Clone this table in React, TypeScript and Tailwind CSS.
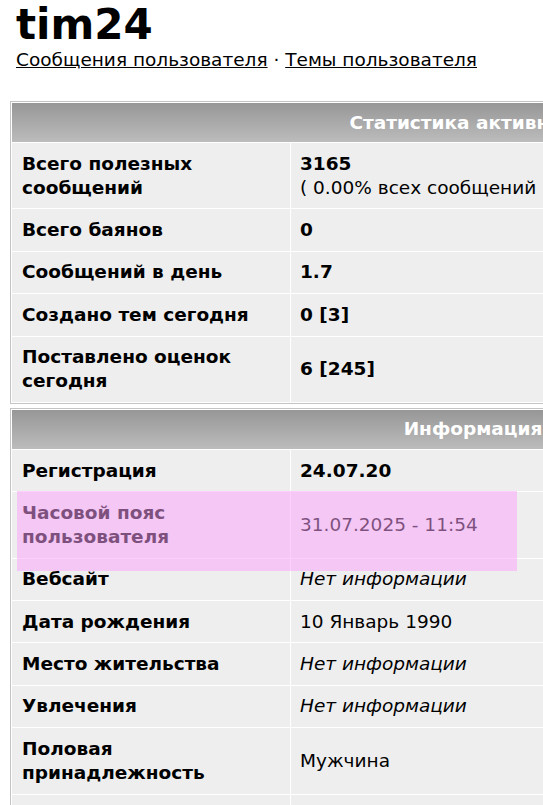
import React from 'react';

type Row = { label: string; value: React.ReactNode; valueClass?: string };

const statsRows: Row[] = [
  {
    label: 'Всего полезных сообщений',
    value: (
      <>
        <div className="font-bold">3165</div>
        <div>( 0.00% всех сообщений )</div>
      </>
    ),
  },
  { label: 'Всего баянов', value: '0', valueClass: 'font-bold' },
  { label: 'Сообщений в день', value: '1.7', valueClass: 'font-bold' },
  { label: 'Создано тем сегодня', value: '0 [3]', valueClass: 'font-bold' },
  { label: 'Поставлено оценок сегодня', value: '6 [245]', valueClass: 'font-bold' },
];

const infoRows: Row[] = [
  { label: 'Регистрация', value: '24.07.20', valueClass: 'font-bold' },
  { label: 'Часовой пояс пользователя', value: '31.07.2025 - 11:54' },
  { label: 'Вебсайт', value: 'Нет информации', valueClass: 'italic' },
  { label: 'Дата рождения', value: '10 Январь 1990' },
  { label: 'Место жительства', value: 'Нет информации', valueClass: 'italic' },
  { label: 'Увлечения', value: 'Нет информации', valueClass: 'italic' },
  { label: 'Половая принадлежность', value: 'Мужчина' },
  { label: '\u00a0', value: '' },
];

function InfoTable({ title, rows }: { title: string; rows: Row[] }) {
  return (
    <table className="w-[926px] border border-[#c4c4c4] bg-white border-separate border-spacing-[1px] table-fixed">
      <colgroup>
        <col className="w-[278px]" />
        <col />
      </colgroup>
      <thead>
        <tr>
          <th
            colSpan={2}
            className="h-[39px] bg-gradient-to-b from-[#979797] to-[#bcbcbc] text-white font-bold text-center"
          >
            {title}
          </th>
        </tr>
      </thead>
      <tbody>
        {rows.map((r, i) => (
          <tr key={i}>
            <td className="bg-[#eeeeee] px-[10px] py-[8.7px] font-bold align-middle">{r.label}</td>
            <td className={`bg-[#eeeeee] px-[9px] py-[8.7px] align-middle whitespace-nowrap ${r.valueClass ?? ''}`}>
              {r.value}
            </td>
          </tr>
        ))}
      </tbody>
    </table>
  );
}

export default function App() {
  return (
    <div className="relative w-[543px] h-[805px] overflow-hidden bg-white text-black font-['DejaVu_Sans',sans-serif] text-[18.5px] leading-[24px] pt-[2px]">
      <div className="px-4">
        <h1 className="text-[42px] leading-[46px] font-bold">tim24</h1>
        <div>
          <a href="#" className="underline">Сообщения пользователя</a> · <a href="#" className="underline">Темы пользователя</a>
        </div>
      </div>
      <div className="mt-[29px] ml-[10px] flex flex-col gap-[4px]">
        <InfoTable title="Статистика активности" rows={statsRows} />
        <InfoTable title="Информация" rows={infoRows} />
      </div>
      {/* highlight over the timezone row */}
      <div className="absolute left-[17px] top-[491px] w-[500px] h-[80px] bg-[rgba(250,160,250,0.5)]" />
    </div>
  );
}
